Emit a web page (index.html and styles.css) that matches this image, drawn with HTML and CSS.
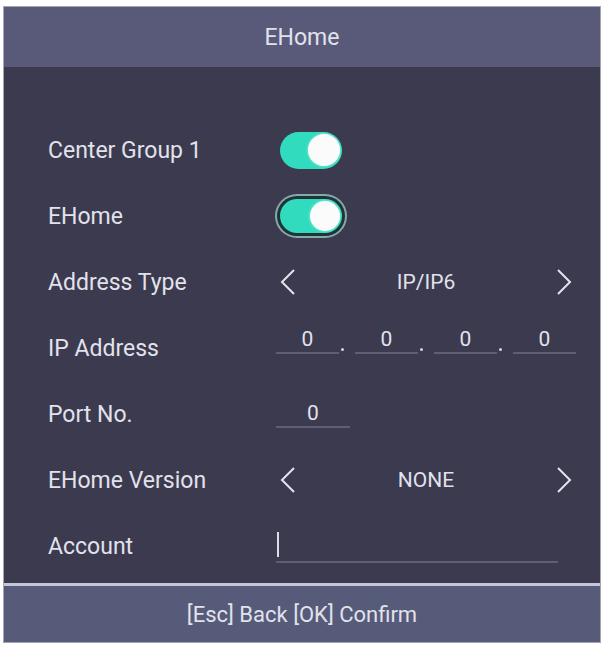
FILE: index.html
```html
<!DOCTYPE html>
<html lang="en">
<head>
  <meta charset="UTF-8" />
  <meta name="viewport" content="width=device-width, initial-scale=1.0" />
  <title>EHome</title>
  <link rel="stylesheet" href="styles.css">
</head>
<body>
  <div class="screen">
    <div class="title">EHome</div>

    <div class="form">
      <div class="row">
        <span class="label">Center Group 1</span>
        <span class="switch"></span>
      </div>
      <div class="row">
        <span class="label">EHome</span>
        <span class="switch focused"></span>
      </div>
      <div class="row">
        <span class="label">Address Type</span>
        <div class="picker">
          <svg class="chev" viewBox="0 0 16 28"><polyline points="14,2 2,14 14,26" /></svg>
          <span class="value">IP/IP6</span>
          <svg class="chev" viewBox="0 0 16 28"><polyline points="2,2 14,14 2,26" /></svg>
        </div>
      </div>
      <div class="row">
        <span class="label">IP Address</span>
        <div class="ip">
          <span class="octet">0</span><span class="dot"></span>
          <span class="octet">0</span><span class="dot"></span>
          <span class="octet">0</span><span class="dot"></span>
          <span class="octet">0</span>
        </div>
      </div>
      <div class="row">
        <span class="label">Port No.</span>
        <span class="octet port">0</span>
      </div>
      <div class="row">
        <span class="label">EHome Version</span>
        <div class="picker">
          <svg class="chev" viewBox="0 0 16 28"><polyline points="14,2 2,14 14,26" /></svg>
          <span class="value">NONE</span>
          <svg class="chev" viewBox="0 0 16 28"><polyline points="2,2 14,14 2,26" /></svg>
        </div>
      </div>
      <div class="row">
        <span class="label">Account</span>
        <div class="text-input"><span class="caret"></span></div>
      </div>
    </div>

    <div class="footer">[Esc] Back [OK] Confirm</div>
  </div>
</body>
</html>
```

FILE: styles.css
```css
body {
  margin: 0;
  background: #fff;
  font-family: Roboto, "Liberation Sans", Arial, sans-serif;
  color: #e2e2ec;
}
.screen {
  width: 596px;
  margin: 6px 3px 0 3px;
  border: 1px solid #a4a4b2;
  background: #3b3a4f;
}
.title {
  height: 60px;
  background: #595a79;
  font-size: 23px;
  display: flex;
  align-items: center;
  justify-content: center;
}
.form {
  padding: 50px 0 4px 44px;
}
.row {
  height: 66px;
  display: grid;
  grid-template-columns: 228px 1fr;
  align-items: center;
}
.label {
  font-size: 23px;
}
.switch {
  position: relative;
  width: 62px;
  height: 37px;
  margin-left: 4px;
  border-radius: 19px;
  background: #31dbbd;
}
.switch::after {
  content: "";
  position: absolute;
  right: 2px;
  top: 50%;
  width: 32px;
  height: 32px;
  margin-top: -16px;
  border-radius: 50%;
  background: #fbfbfb;
  box-shadow: 0 0 3px rgba(255, 255, 255, 0.6);
}
.switch.focused {
  height: 34px;
  box-shadow: 0 0 0 3px #1f3438, 0 0 0 5px #86a9aa;
}
.switch.focused::after {
  width: 30px;
  height: 30px;
  margin-top: -15px;
}
.picker {
  width: 300px;
  display: flex;
  align-items: center;
  justify-content: space-between;
  padding: 0 4px;
  box-sizing: border-box;
}
.chev {
  width: 16px;
  height: 28px;
}
.chev polyline {
  fill: none;
  stroke: #e4e4ee;
  stroke-width: 2;
}
.value {
  font-size: 21px;
}
.ip {
  display: flex;
  align-items: flex-end;
  width: 300px;
  margin-bottom: 16px;
}
.octet {
  width: 63px;
  font-size: 21px;
  line-height: 26px;
  text-align: center;
  border-bottom: 2px solid #5f5e78;
}
.octet.port {
  width: 74px;
}
.dot {
  width: 16px;
  height: 6px;
  display: flex;
  padding-left: 2px;
  box-sizing: border-box;
}
.dot::before {
  content: "";
  width: 3px;
  height: 3px;
  border-radius: 50%;
  background: #d4d4e0;
}
.text-input {
  width: 282px;
  height: 32px;
  border-bottom: 2px solid #5f5e78;
}
.caret {
  display: block;
  width: 2px;
  height: 25px;
  margin: 3px 0 0 1px;
  background: #dcdce6;
}
.footer {
  height: 56px;
  border-top: 3px solid #c6c6d8;
  background: #565b7a;
  font-size: 22px;
  display: flex;
  align-items: center;
  justify-content: center;
}
```
